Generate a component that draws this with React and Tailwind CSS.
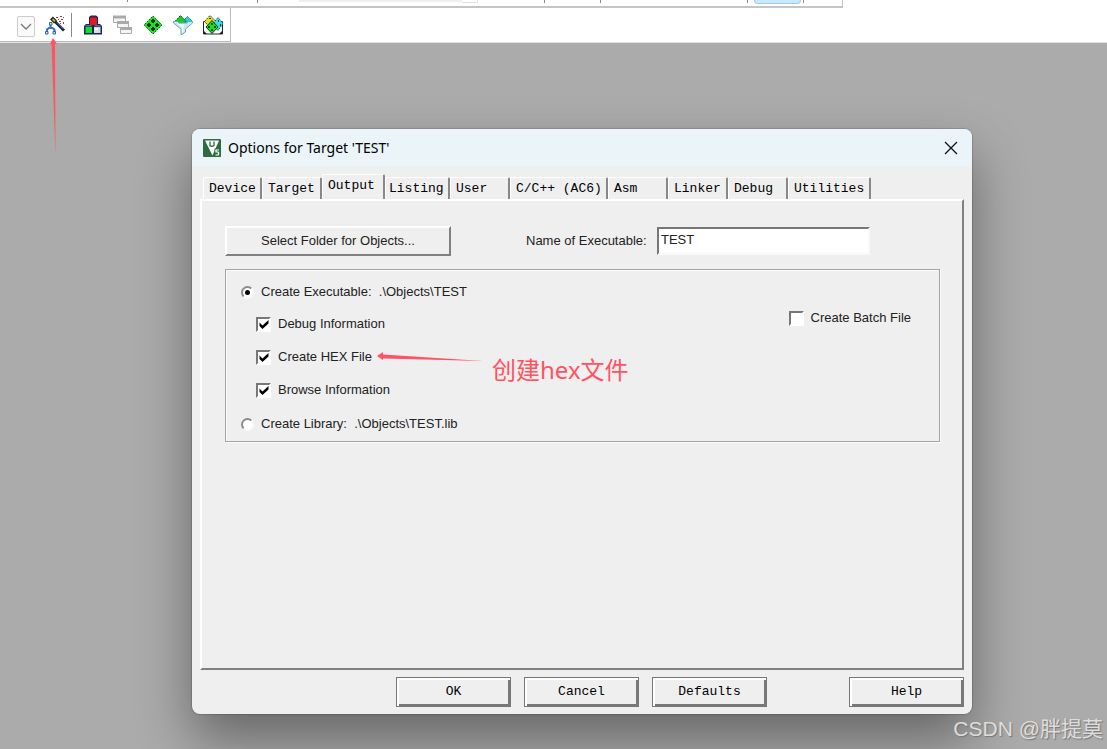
import React, { useState } from "react";

const tabs = [
  { name: "Device", width: "w-[59px]" },
  { name: "Target", width: "w-[60px]" },
  { name: "Output", width: "w-[63px]" },
  { name: "Listing", width: "w-[65px]", tight: true },
  { name: "User", width: "w-[60px]" },
  { name: "C/C++ (AC6)", width: "w-[98px]" },
  { name: "Asm", width: "w-[60px]" },
  { name: "Linker", width: "w-[60px]" },
  { name: "Debug", width: "w-[60px]" },
  { name: "Utilities", width: "w-[83px]" },
];

function WandIcon() {
  return (
    <svg width="20" height="20" viewBox="0 0 20 20">
      <path d="M9 5.500l10 10" stroke="#16233f" strokeWidth="2.800" />
      <path d="M12 7.500l6.500 6.500" stroke="#7f9cc4" strokeWidth="0.800" />
      <path d="M6.500 3l4 4" stroke="#1d1d12" strokeWidth="4" />
      <path d="M7.500 4l2.500 2.500" stroke="#b9a435" strokeWidth="2" />
      <path
        d="M11 2h2v1h-2zM15 1h2v1h-2zM13 4h1v1h-1zM16 4h2v1h-2zM14 6h2v1h-2zM18 2h1v1h-1zM18 7h1v2h-1zM15 8h1v1h-1z"
        fill="#c22c38"
      />
      <g stroke="#3b6fc0" strokeWidth="2" fill="none">
        <path d="M5.500 9v4M2 17v-2.500l2-1.500h3.500l2 1.500V17" />
      </g>
      <g fill="#dcebd0" stroke="#2b62b8">
        <path d="M4.500 7.500h2.500v2.500H4.500zM.500 16.500H3V19H.500zM8 16.500h2.500V19H8z" />
      </g>
    </svg>
  );
}

function BlocksIcon() {
  return (
    <svg width="20" height="20" viewBox="0 0 20 20">
      <path d="M6 2l2-1.500h5L15 2v7h2l2 2v8.500H1V11l2-2h3z" fill="#1e2260" />
      <path d="M7 3h7v7H7z" fill="#e01c20" />
      <path d="M8 1.500h5l1 1.500H7z" fill="#8a1830" />
      <path d="M3 10h5l1 1.500H2z" fill="#5d6a98" />
      <path d="M12 10h5l1 1.500h-7z" fill="#5d6a98" />
      <path d="M2.500 12H9v6H2.500z" fill="#08e51c" />
      <path d="M11 12h6.500v6H11z" fill="#d7dfe6" />
      <path d="M12 13h3v2h-3z" fill="#ffffff" />
    </svg>
  );
}

function WindowsIcon() {
  return (
    <svg width="20" height="20" viewBox="0 0 20 20" stroke="#aaaaaa">
      <path d="M.500 1.500h12v6H.500z" fill="#f4f4f4" />
      <path d="M0 2h13" strokeWidth="3" />
      <path d="M4.500 7.500h11v5h-11z" fill="#f4f4f4" />
      <path d="M4 7.500h12" strokeWidth="3" />
      <path d="M7.500 12.500h11v6h-11z" fill="#f4f4f4" />
      <path d="M7 13.500h12" strokeWidth="3" />
    </svg>
  );
}

function DiamondIcon() {
  return (
    <svg width="20" height="20" viewBox="0 0 20 20">
      <path d="M10 1l9 9-9 9-9-9z" fill="#19e51c" stroke="#0a6a10" strokeDasharray="2 1" />
      <path
        d="M9 4h2v1h1v2h-1v1H9V7H8V5h1zM5 8h2v1h1v2H7v1H5v-1H4V9h1zM13 8h2v1h1v2h-1v1h-2v-1h-1V9h1zM9 12h2v1h1v2h-1v1H9v-1H8v-2h1z"
        fill="#05300a"
      />
    </svg>
  );
}

function FunnelIcon() {
  return (
    <svg width="20" height="20" viewBox="0 0 20 20">
      <path d="M10 6l4.500-4.500L19 6l-4 3h-4z" fill="#20cfe0" stroke="#1a6670" strokeDasharray="2 1" />
      <path d="M2 6.500l5.500-6L13 6.500 10 9H4z" fill="#18cc24" stroke="#0d4214" strokeDasharray="2 1" />
      <path d="M.500 6.500h4L6 8h8l1.500-1.500h4V8L12.500 14v3L9 19.500H8V14L.500 8z" fill="#c4edf2" stroke="#6fa6b2" />
      <path d="M5 9h6l-1 8H9v-4z" fill="#ffffff" />
    </svg>
  );
}

function PackIcon() {
  return (
    <svg width="20" height="20" viewBox="0 0 20 20">
      <path d="M.500 6.500h19v12.500H.500z" fill="#ffffff" stroke="#222222" />
      <path d="M1.500 6.500l5.500-6 6 6-6 6z" fill="#e2df24" stroke="#3b3c13" strokeDasharray="2 1" />
      <path d="M10 8.500l5-6 5 6-5 7z" fill="#38dbe8" stroke="#15606c" strokeDasharray="2 1" />
      <path d="M3 12l6-6.500 6 6.500-6 6.500z" fill="#18df24" stroke="#0a3c10" />
      <path d="M8 8h2v2H8zM5 11h2v2H5zM11 11h2v2h-2zM8 14h2v2H8zM6 3h2v1H6zM15 5h1v2h-1zM17 9h1v2h-1z" fill="#0d4d12" />
      <path d="M0 15l4 4H0zM20 15l-4 4h4z" fill="#222222" />
    </svg>
  );
}

function LogoIcon() {
  return (
    <svg width="18" height="18" viewBox="0 0 18 18">
      <rect width="18" height="18" rx="1" fill="#2f6b41" />
      <path d="M2 1.500h14L9.500 16.500z" fill="#ffffff" />
      <path d="M7 2.500v5M7 6.500q2 1.500 4 0M11 2.500v4.500" fill="none" stroke="#2f6b41" strokeWidth="1.300" />
      <path d="M11.500 9.500H17V17h-5.500z" fill="#2f6b41" />
      <path d="M16 11h-3v2h2q1.500 1.500 0 3h-2.500" fill="none" stroke="#ffffff" strokeWidth="1.200" />
    </svg>
  );
}

function CheckBox({ label, checked }) {
  return (
    <label className="flex h-4 items-center gap-[7px] whitespace-nowrap">
      <span className="grid h-[15px] w-[15px] shrink-0">
        <input
          type="checkbox"
          defaultChecked={checked}
          className="peer col-start-1 row-start-1 appearance-none border-2 border-t-[#777777] border-l-[#777777] border-r-white border-b-white bg-white"
        />
        <svg viewBox="0 0 15 15" className="pointer-events-none invisible col-start-1 row-start-1 peer-checked:visible">
          <path d="M3.500 5.500L6.500 8.500l6-5.500v3.500L6.500 12l-3-3z" fill="#000000" />
        </svg>
      </span>
      {label}
    </label>
  );
}

function RadioButton({ label, value, current, onSelect }) {
  return (
    <label className="flex h-4 items-center gap-[7px] whitespace-pre">
      <span className="grid h-[13px] w-[13px] shrink-0">
        <input
          type="radio"
          name="kind"
          checked={current === value}
          onChange={() => onSelect(value)}
          className="peer col-start-1 row-start-1 appearance-none rounded-full border-2 border-t-[#8a8a8a] border-l-[#8a8a8a] border-r-[#fafafa] border-b-[#fafafa] bg-white"
        />
        <span className="pointer-events-none invisible col-start-1 row-start-1 h-[5px] w-[5px] place-self-center rounded-full bg-black peer-checked:visible"></span>
      </span>
      {label}
    </label>
  );
}

function DialogButton({ children }) {
  return (
    <button className="h-[30px] w-[115px] border border-[#777777] bg-[#efefef] font-['Liberation_Mono',monospace] text-[13px] leading-4 text-black shadow-[inset_2px_2px_0_#ffffff,inset_-2px_-2px_0_#777777]">
      {children}
    </button>
  );
}

function Toolbars() {
  return (
    <header className="bg-white">
      <div className="flex h-2 w-full max-w-[843px] items-start border-r border-b-2 border-[#c4c4c4] pl-[127px]">
        <div className="h-[2px] w-[1px] bg-[#888888]"></div>
        <div className="ml-[129px] h-[3px] w-[1px] bg-[#888888]"></div>
        <div className="ml-[41px] h-[2px] w-[163px] bg-[#eeeeee]"></div>
        <div className="h-[3px] w-4 border-r border-b border-[#e2e2e2]"></div>
        <div className="ml-[66px] h-[3px] w-[1px] bg-[#888888]"></div>
        <div className="ml-[55px] h-[3px] w-[1px] bg-[#888888]"></div>
        <div className="ml-[146px] h-[3px] w-[1px] bg-[#888888]"></div>
        <div className="ml-[6px] h-1 w-[47px] rounded-b-sm border border-t-0 border-[#99cdf8] bg-[#cce6fc]"></div>
        <div className="ml-[2px] h-[3px] w-[1px] bg-[#888888]"></div>
      </div>
      <div className="flex h-[35px] border-b border-[#e2e2e2]">
        <div className="flex w-[231px] items-center border-r border-b border-[#bbbbbb] pl-[17px]">
          <button aria-label="Target list" className="mt-1 flex h-[21px] w-[18px] items-center justify-center rounded-xs border border-[#cccccc] bg-[#fafafa]">
            <svg width="12" height="8" viewBox="0 0 12 8" fill="none" stroke="#777777" strokeWidth="1.300">
              <path d="M1 1l5 5 5-5" />
            </svg>
          </button>
          <button aria-label="Options for Target" className="ml-[10px]"><WandIcon /></button>
          <div className="mx-[6px] h-6 w-[1px] bg-[#888888]"></div>
          <div className="ml-[5px] flex gap-[10px]">
            <button aria-label="File Extensions"><BlocksIcon /></button>
            <button aria-label="Multi-Project"><WindowsIcon /></button>
            <button aria-label="Run-Time Environment"><DiamondIcon /></button>
            <button aria-label="Select Packs"><FunnelIcon /></button>
            <button aria-label="Pack Installer"><PackIcon /></button>
          </div>
        </div>
      </div>
    </header>
  );
}

export default function App() {
  const [activeTab, setActiveTab] = useState("Output");
  const [kind, setKind] = useState("executable");

  return (
    <div className="relative min-h-screen overflow-hidden bg-[#ababab] pb-[35px] font-['Liberation_Sans','Noto_Sans_CJK_SC',sans-serif] text-[13px] leading-4 text-[#222222]">
      <Toolbars />
      <svg width="8" height="120" viewBox="0 0 8 120" className="absolute top-[38px] left-[50px]">
        <path d="M3 0l4 6H5l.500 112L1.500 6H0z" fill="#ff5363" />
      </svg>

      <main className="px-48 pt-[86px]">
        <section className="w-[780px] rounded-lg bg-[#efefef] pb-[7px] shadow-[0_0_1px_1px_rgba(0,0,0,0.15),0_26px_54px_rgba(0,0,0,0.4)]">
          <div className="flex h-[38px] items-center rounded-t-lg bg-[#ebf4f8] pr-[14px] pl-[11px]">
            <LogoIcon />
            <h1 className="ml-[7px] font-['Noto_Sans',sans-serif] text-sm leading-4 text-black">Options for Target 'TEST'</h1>
            <button aria-label="Close" className="ml-auto">
              <svg width="14" height="14" viewBox="0 0 14 14" stroke="#111111" strokeWidth="1.300">
                <path d="M1 1l12 12M13 1L1 13" />
              </svg>
            </button>
          </div>

          <div className="px-2 pt-2">
            <div role="tablist" className="flex h-6 items-end pl-[3px] font-['Liberation_Mono',monospace] text-black">
              {tabs.map((tab) => (
                <button
                  key={tab.name}
                  role="tab"
                  aria-selected={activeTab === tab.name}
                  onClick={() => setActiveTab(tab.name)}
                  className={`${tab.width} ${tab.tight ? "pl-[3px]" : "pl-[5px]"} ${
                    activeTab === tab.name ? "h-[25px] pb-[2px]" : "h-[22px]"
                  } shrink-0 rounded-t-xs border-t border-r-2 border-l border-t-white border-r-[#888888] border-l-white text-left whitespace-nowrap`}
                >
                  {tab.name}
                </button>
              ))}
            </div>

            <div role="tabpanel" className="min-h-[471px] border-2 border-t-white border-r-[#808080] border-b-[#808080] border-l-white px-[23px] pt-[25px]">
              <div className="flex items-center">
                <button className="h-[30px] w-[226px] border-2 border-t-white border-r-[#808080] border-b-[#808080] border-l-white">
                  Select Folder for Objects...
                </button>
                <label htmlFor="executable" className="ml-[75px] w-[131px]">Name of Executable:</label>
                <input
                  id="executable"
                  defaultValue="TEST"
                  className="h-7 w-[213px] border-2 border-t-[#777777] border-l-[#777777] border-r-[#f9f9f9] border-b-[#f9f9f9] bg-white px-[2px] pb-1"
                />
              </div>

              <div className="relative mt-[13px] flex h-[173px] w-[715px] justify-between border border-[#a5a5a5] pt-[14px] pr-7 pl-[15px] shadow-[inset_1px_1px_0_#fafafa,1px_1px_0_#fafafa]">
                <div className="flex flex-col">
                  <RadioButton label="Create Executable:  .\Objects\TEST" value="executable" current={kind} onSelect={setKind} />
                  <div className="mt-4 mb-[18px] flex flex-col gap-[17px] pl-[15px]">
                    <CheckBox label="Debug Information" checked />
                    <CheckBox label="Create HEX File" checked />
                    <CheckBox label="Browse Information" checked />
                  </div>
                  <RadioButton label="Create Library:  .\Objects\TEST.lib" value="library" current={kind} onSelect={setKind} />
                </div>
                <div className="pt-[26px]">
                  <CheckBox label="Create Batch File" />
                </div>
                <svg width="106" height="10" viewBox="0 0 106 10" className="absolute top-[82px] left-[151px]">
                  <path d="M0 4l6-4v2.500L106 9 6 6.500V8z" fill="#ff5363" />
                </svg>
                <span className="absolute top-[84px] left-[266px] font-['Noto_Sans','Noto_Sans_CJK_SC',sans-serif] text-2xl leading-8 whitespace-nowrap text-[#ff5363]">
                  创建hex文件
                </span>
              </div>
            </div>

            <div className="mt-[7px] flex">
              <div className="ml-auto flex gap-[13px]">
                <DialogButton>OK</DialogButton>
                <DialogButton>Cancel</DialogButton>
                <DialogButton>Defaults</DialogButton>
              </div>
              <div className="ml-[82px]">
                <DialogButton>Help</DialogButton>
              </div>
            </div>
          </div>
        </section>
      </main>

      <div className="absolute right-1 bottom-1 text-[21px] leading-8 text-[#dddddd] [text-shadow:1px_1px_1px_#777777]">
        CSDN @胖提莫
      </div>
    </div>
  );
}
